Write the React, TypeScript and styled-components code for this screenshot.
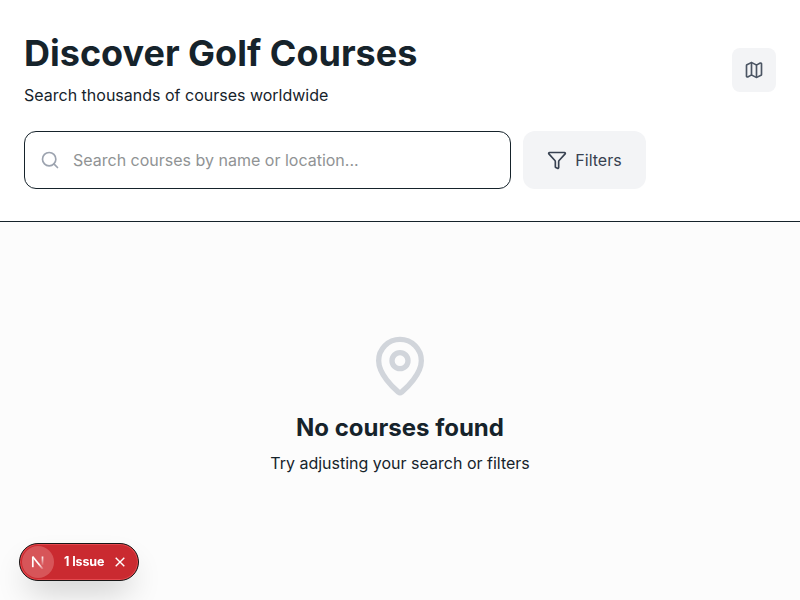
import React from "react";
import styled, { createGlobalStyle } from "styled-components";
import { Funnel, Map, MapPin, Search } from "lucide-react";

const GlobalStyle = createGlobalStyle`
  *, *::before, *::after { box-sizing: border-box; }
  body { margin: 0; background: #fcfcfc; color: #16232b; font-family: Inter, "Liberation Sans", sans-serif; font-size: 16px; line-height: 24px; overflow: hidden; }
  h1, h3, p { margin: 0; }
`;
const Page = styled.main`
  height: 600px;
  display: flex;
  flex-direction: column;
  background: #fcfcfc;
`;
const Header = styled.header`
  height: 222px;
  padding: 32px 24px;
  background: #fff;
  border-bottom: 1px solid #16232b;
`;
const TitleRow = styled.div`
  display: flex;
  align-items: center;
  justify-content: space-between;
  margin-bottom: 24px;
`;
const Title = styled.h1`
  font-size: 36px;
  line-height: 43px;
  font-weight: 700;
  margin-bottom: 8px;
`;
const Text = styled.p`
  line-height: 24px;
`;
const MapButton = styled.button`
  display: grid;
  place-items: center;
  width: 44px;
  height: 44px;
  padding: 0;
  border: 0;
  border-radius: 8px;
  background: #f3f4f6;
  color: #4b5563;
`;
const SearchRow = styled.div`
  display: flex;
  gap: 12px;
`;
const SearchField = styled.label`
  display: flex;
  align-items: center;
  gap: 13px;
  width: 487px;
  height: 58px;
  padding: 0 15px;
  border: 1px solid #16232b;
  border-radius: 12px;
  color: #9ca3af;
`;
const SearchInput = styled.input`
  flex: 1;
  padding: 0;
  border: 0;
  outline: 0;
  background: none;
  font: inherit;
  &::placeholder { color: #909394; opacity: 1; }
`;
const FilterButton = styled.button`
  display: flex;
  align-items: center;
  justify-content: center;
  gap: 8px;
  width: 123px;
  height: 58px;
  padding: 0;
  border: 0;
  border-radius: 12px;
  background: #f3f4f6;
  color: #374151;
  font: inherit;
`;
const Empty = styled.section`
  display: flex;
  flex-direction: column;
  align-items: center;
  padding-top: 112px;
`;
const Pin = styled(MapPin)`
  color: #d1d5db;
  margin-bottom: 14px;
`;
const EmptyTitle = styled.h3`
  font-size: 24px;
  line-height: 31px;
  font-weight: 700;
  margin-bottom: 8px;
`;
const IssueBadge = styled.div`
  position: fixed;
  left: 19px;
  bottom: 19px;
  display: flex;
  align-items: center;
  width: 120px;
  height: 38px;
  padding: 2px;
  border: 1px solid #171717;
  border-radius: 19px;
  background: #ca2a30;
  color: #fff;
  box-shadow: inset 0 0 0 1px #e5484d, 0 16px 32px -8px #0000003d;
`;
const Logo = styled.div`
  display: grid;
  place-items: center;
  flex: none;
  width: 32px;
  height: 32px;
  border-radius: 50%;
  background: #d75559;
`;
const IssueText = styled.span`
  width: 42px;
  margin: 0 9px 0 10px;
  font: 700 12.5px/16px Inter, sans-serif;
  letter-spacing: -0.1px;
  white-space: nowrap;
`;

export default function App() {
  return (
    <Page>
      <GlobalStyle />
      <Header>
        <TitleRow>
          <div>
            <Title>Discover Golf Courses</Title>
            <Text>Search thousands of courses worldwide</Text>
          </div>
          <MapButton aria-label="Map view"><Map size={20} /></MapButton>
        </TitleRow>
        <SearchRow>
          <SearchField><Search size={20} /><SearchInput placeholder="Search courses by name or location..." /></SearchField>
          <FilterButton><Funnel size={20} />Filters</FilterButton>
        </SearchRow>
      </Header>
      <Empty>
        <Pin size={64} />
        <EmptyTitle>No courses found</EmptyTitle>
        <Text>Try adjusting your search or filters</Text>
      </Empty>
      <IssueBadge>
        <Logo>
          <svg width="14" height="14" viewBox="0 0 14 14" fill="none" strokeWidth="1.7">
            <defs>
              <linearGradient id="diagonal" x1="8" y1="9" x2="12.5" y2="14" gradientUnits="userSpaceOnUse">
                <stop stopColor="#fff" />
                <stop offset="1" stopColor="#fff" stopOpacity="0.1" />
              </linearGradient>
              <linearGradient id="stem" x1="0" y1="1" x2="0" y2="10" gradientUnits="userSpaceOnUse">
                <stop stopColor="#fff" />
                <stop offset="1" stopColor="#fff" stopOpacity="0.1" />
              </linearGradient>
            </defs>
            <path stroke="#fff" d="M1.8 12.2V1.5" />
            <path stroke="url(#diagonal)" d="M1.8 1.7l10 12.3" />
            <path stroke="url(#stem)" d="M11.5 1.5v8.5" />
          </svg>
        </Logo>
        <IssueText>1 Issue</IssueText>
        <svg width="10" height="10" viewBox="0 0 10 10" fill="none" stroke="#fff" strokeWidth="1.4"><path d="m.7.7 8.6 8.6M9.3.7.7 9.3" /></svg>
      </IssueBadge>
    </Page>
  );
}
